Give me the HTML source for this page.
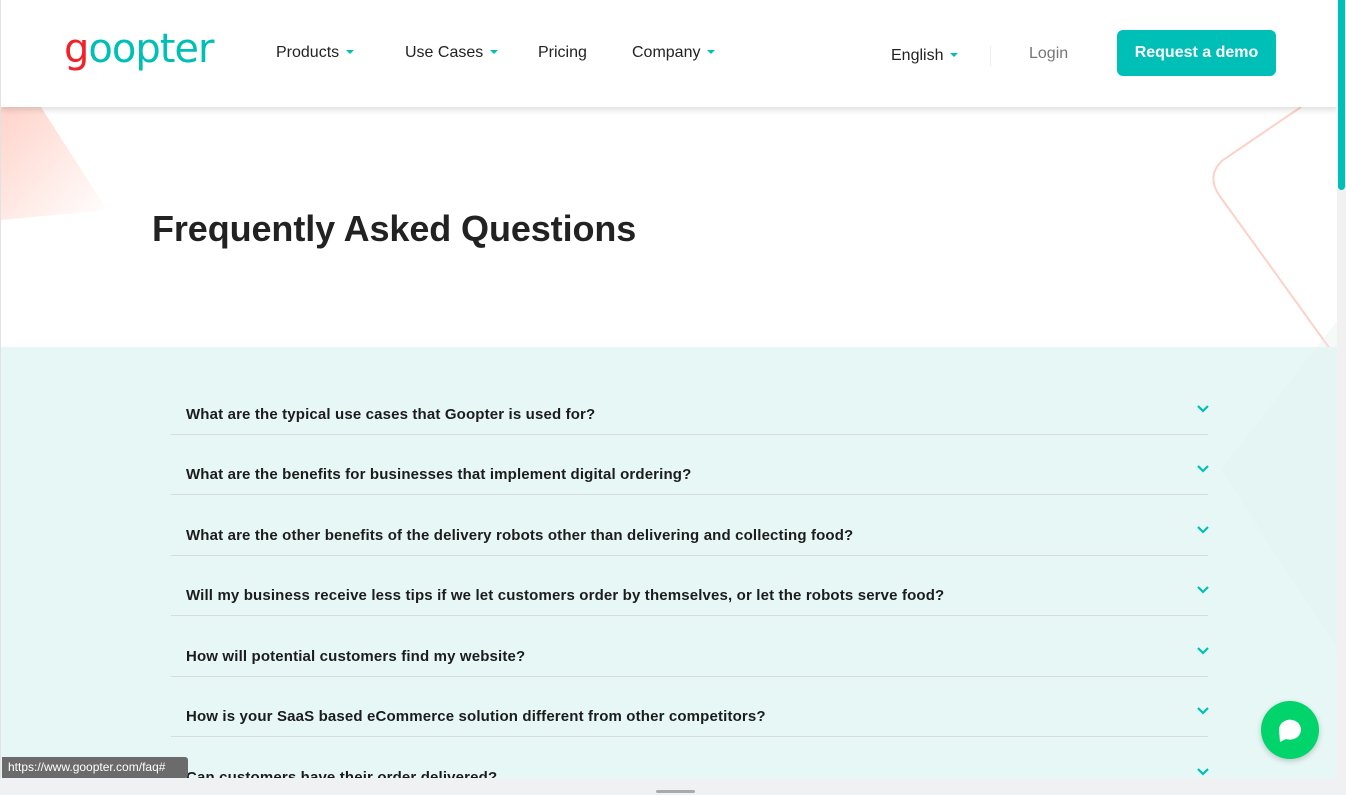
<!DOCTYPE html>
<html><head><style>
*{margin:0;padding:0;box-sizing:border-box}
body{width:1346px;height:795px;overflow:hidden;background:#f0f1f3;font-family:"Liberation Sans",sans-serif;position:relative}
#page{position:absolute;left:0;top:0;width:1337px;height:778px;background:#fff;overflow:hidden;border-left:1px solid #e2e2e2}
#hdr{position:absolute;left:0;top:0;width:1337px;height:107px;background:#fff;box-shadow:0 3px 6px rgba(0,0,0,.13);z-index:5}
.nav{position:absolute;top:44px;font-size:16px;color:#222}
.car{display:inline-block;width:0;height:0;border-left:4px solid transparent;border-right:4px solid transparent;border-top:4px solid #00bfb6;margin-left:7px;vertical-align:3px}
#teal{position:absolute;left:0;top:347px;width:1337px;height:431px;background:#e6f7f6}
.q{position:absolute;left:170px;width:1037px;height:61px;border-bottom:1px solid #d6dcdc}
.q span{position:absolute;left:15px;top:32px;font-size:15px;font-weight:bold;color:#1c1c1c;letter-spacing:.15px}
.q svg{position:absolute;left:1026px;top:31px}
</style></head><body>
<div id="page">
<svg style="position:absolute;left:0;top:0" width="1337" height="778">
<defs><linearGradient id="g1" x1="0" y1="0" x2="1" y2="1"><stop offset="0" stop-color="#ffd3ca"/><stop offset="1" stop-color="#fff"/></linearGradient></defs>
<polygon points="0,107 40,107 106,210 0,220" fill="url(#g1)"/>
<path d="M1300,107 L1222,160 Q1205,175 1218,195 L1337,360" stroke="#fcd2c8" stroke-width="2" fill="none"/>
</svg>
<div id="teal"></div>
<svg style="position:absolute;left:1200px;top:320px" width="137" height="330"><polygon points="137,0 137,330 20,150" fill="#e2f1ef" opacity=".35"/></svg>
<div id="hdr">
<div style="position:absolute;left:63px;top:26px;font-size:40px;letter-spacing:-1px;color:#00bfb6;font-family:'DejaVu Sans',sans-serif"><span style="color:#f0222a">g</span>oopter</div>
<div class="nav" style="left:275px">Products<span class="car"></span></div>
<div class="nav" style="left:404px">Use Cases<span class="car"></span></div>
<div class="nav" style="left:537px">Pricing</div>
<div class="nav" style="left:631px">Company<span class="car"></span></div>
<div class="nav" style="left:890px;top:47px">English<span class="car"></span></div>
<div style="position:absolute;left:989px;top:46px;width:1px;height:20px;background:#eee"></div>
<div class="nav" style="left:1028px;top:45px;color:#777">Login</div>
<div style="position:absolute;left:1116px;top:30px;width:159px;height:46px;background:#00bfb6;border-radius:6px;color:#fff;font-weight:bold;font-size:16px;text-align:center;line-height:46px">Request a demo</div>
</div>
<div style="position:absolute;left:151px;top:208px;font-size:36px;font-weight:bold;color:#222;letter-spacing:-.1px">Frequently Asked Questions</div>
<div class="q" style="top:374px"><span>What are the typical use cases that Goopter is used for?</span><svg width="12" height="8"><path d="M1,1 L6,6 L11,1" stroke="#00bfb6" stroke-width="2.2" fill="none"/></svg></div>
<div class="q" style="top:434px"><span>What are the benefits for businesses that implement digital ordering?</span><svg width="12" height="8"><path d="M1,1 L6,6 L11,1" stroke="#00bfb6" stroke-width="2.2" fill="none"/></svg></div>
<div class="q" style="top:495px"><span>What are the other benefits of the delivery robots other than delivering and collecting food?</span><svg width="12" height="8"><path d="M1,1 L6,6 L11,1" stroke="#00bfb6" stroke-width="2.2" fill="none"/></svg></div>
<div class="q" style="top:555px"><span>Will my business receive less tips if we let customers order by themselves, or let the robots serve food?</span><svg width="12" height="8"><path d="M1,1 L6,6 L11,1" stroke="#00bfb6" stroke-width="2.2" fill="none"/></svg></div>
<div class="q" style="top:616px"><span>How will potential customers find my website?</span><svg width="12" height="8"><path d="M1,1 L6,6 L11,1" stroke="#00bfb6" stroke-width="2.2" fill="none"/></svg></div>
<div class="q" style="top:676px"><span>How is your SaaS based eCommerce solution different from other competitors?</span><svg width="12" height="8"><path d="M1,1 L6,6 L11,1" stroke="#00bfb6" stroke-width="2.2" fill="none"/></svg></div>
<div class="q" style="top:737px;border:none"><span>Can customers have their order delivered?</span><svg width="12" height="8"><path d="M1,1 L6,6 L11,1" stroke="#00bfb6" stroke-width="2.2" fill="none"/></svg></div>
<div style="position:absolute;left:1260px;top:701px;width:58px;height:58px;border-radius:50%;background:#00d46a;box-shadow:0 2px 6px rgba(0,0,0,.2)">
<svg width="58" height="58"><path d="M18,29 a11,10 0 1 1 7,9 L19,41 Z" fill="#fff"/></svg></div>
</div>
<div style="position:absolute;left:2px;top:757px;width:186px;height:21px;background:#6b6b6b;color:#fff;font-size:12px;line-height:21px;padding-left:6px;border-radius:0 3px 3px 0">https://www.goopter.com/faq#</div>
<div style="position:absolute;left:1337px;top:0;width:9px;height:778px;background:#f1f1f1"></div>
<div style="position:absolute;left:1338px;top:0;width:7px;height:190px;background:#00bfb6;border-radius:0 0 4px 4px"></div>
<div style="position:absolute;left:656px;top:790px;width:39px;height:3px;background:#aaa;border-radius:2px"></div>
</body></html>
